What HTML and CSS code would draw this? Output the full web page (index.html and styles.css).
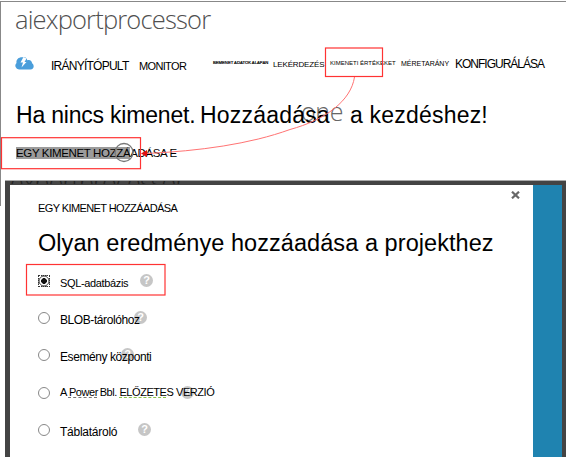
FILE: index.html
```html
<!DOCTYPE html>
<html lang="hu">
<head>
<meta charset="utf-8">
<title>aiexportprocessor</title>
<link rel="stylesheet" href="styles.css">
</head>
<body>
<main class="page">
  <h1 class="job">aiexportprocessor</h1>
  <nav class="nav">
    <svg class="cloud" width="19" height="13" viewBox="0 0 19 13"><path d="M4 12.5A3.8 3.8 0 0 1 1.5 6C1 3 3 .3 7 .3H9.500C11 .3 12 2 12.3 3.2C15 2.2 17.2 4 17 6.3C19.8 8 19 12.5 15.5 12.5Z" fill="#4a9edb"/><path d="M8.500 0L5.500 5.500H8L6.500 10.500L11.500 5H9.500L11.500 1.500Z" fill="#fff"/></svg>
    <a class="n1">IRÁNYÍTÓPULT</a>
    <a class="n2">MONITOR</a>
    <a class="n3">BEMENET ADATOK ALAPÁN</a>
    <a class="n4">LEKÉRDEZÉS</a>
    <a class="n5">KIMENETI ÉRTÉKEKET</a>
    <a class="n6">MÉRETARÁNY</a>
    <a class="n7">KONFIGURÁLÁSA</a>
  </nav>
  <span class="ghost-one">one</span>
  <h2 class="empty"><span class="e1">Ha nincs kimenet.</span><span class="e2">Hozzáadása</span><span class="e3">a kezdéshez!</span></h2>
  <p class="add"><span class="sel">EGY KIMENET HOZZÁ</span>ADÁSA E</p>
  <section class="dialog">
    <span class="ghost-title">exportprocessor</span>
    <div class="body">
      <svg class="close" width="9" height="8" viewBox="0 0 9 8"><path d="M1 .7L8 7.3M8 .7L1 7.3" stroke="#686868" stroke-width="2.2"/></svg>
      <h4 class="crumb">EGY KIMENET HOZZÁADÁSA</h4>
      <h3 class="title">Olyan eredménye hozzáadása a projekthez</h3>
      <div class="options">
        <label class="opt"><i class="radio on"></i><span class="o1">SQL-adatbázis</span><b class="help h1">?</b></label>
        <label class="opt"><i class="radio"></i><span class="o2">BLOB-tárolóhoz</span><b class="help h2">?</b></label>
        <label class="opt"><i class="radio"></i><span class="o3">Esemény központi</span><b class="help h3">?</b></label>
        <label class="opt"><i class="radio"></i><span class="o4">A <u>Power</u>&thinsp;Bbl. <em>ELŐZETE</em>S VERZIÓ</span><b class="help h4">?</b></label>
        <label class="opt"><i class="radio"></i><span class="o5">Táblatároló</span><b class="help h5">?</b></label>
      </div>
    </div>
    <aside class="rail"></aside>
  </section>
  <svg class="marks" width="566" height="457" viewBox="0 0 566 457" fill="none">
    <circle cx="124" cy="152.5" r="9" stroke="#777" stroke-width="1.3"/>
    <path d="M354.500 77C351 101 325 120 290 129.500C250 144 200 151 146 153.500" stroke="#ff7373" stroke-width="1"/>
    <path d="M141 153.500L147 150V157Z" fill="#e01010"/>
    <g stroke="#f33" stroke-width="1.200"><rect x="325.500" y="48" width="57" height="28.500"/><rect x="1.500" y="137.700" width="139" height="31"/><rect x="26.500" y="264.500" width="138.500" height="30.500"/></g>
  </svg>
</main>
</body>
</html>
```

FILE: styles.css
```css
* { box-sizing: border-box; }
body { margin: 0; background: #fff; font-family: "Liberation Sans", Arial, sans-serif; color: #000; }
h1, h2, h3, h4, p { margin: 0; font-weight: 400; white-space: nowrap; }
.page { position: relative; width: 566px; height: 457px; overflow: hidden; display: flex; flex-direction: column; }
.page::before { content: ""; position: absolute; left: 0; top: 1px; width: 566px; height: 204px; border-left: 1.5px solid #888; border-top: 1px solid #888; }
.job { padding-left: 15px; height: 50px; font: 300 25.5px/38px "Open Sans", sans-serif; color: #505050; letter-spacing: -.83px; }
.nav { display: grid; grid-template-columns: 36px 88px 74px 60px 57px 71px 54px 90px; padding-left: 15px; height: 28px; align-items: center; white-space: nowrap; }
.cloud { margin-top: -1px; }
.n1 { font-size: 12px; letter-spacing: -.75px; padding-top: 3px; }
.n2 { font-size: 11px; letter-spacing: -.65px; padding-top: 4px; }
.n3 { font-size: 4.2px; margin-top: -3px; -webkit-text-stroke: .2px #000; }
.n4 { font-size: 8px; letter-spacing: -.15px; }
.n5 { font-size: 6px; margin-top: -3px; }
.n6 { font-size: 7px; margin-top: -2px; }
.n7 { font-size: 12px; letter-spacing: -1px; }
.ghost-one { position: absolute; left: 301px; top: 94px; font: 300 25px/34px "Open Sans", sans-serif; color: #666; letter-spacing: -.3px; }
.empty { position: relative; display: flex; height: 60px; padding: 22px 0 0 16px; font-size: 23px; line-height: 30px; }
.e1 { width: 184px; letter-spacing: -.2px; }
.e2 { width: 150px; letter-spacing: .2px; }
.e3 { letter-spacing: .2px; }
.add { position: relative; padding-left: 16px; height: 43px; padding-top: 9px; font-size: 11.5px; line-height: 13px; letter-spacing: -.36px; }
.sel { background: #9b9b9b; }
.dialog { position: relative; display: flex; height: 276px; margin-left: 5px; border: solid #444; border-width: 4px 4px 0 5px; box-shadow: 0 -1px #aaa; }
.ghost-title { position: absolute; left: 0; top: -4px; width: 180px; height: 3px; overflow: hidden; font: 300 25px/3px "Open Sans", sans-serif; color: #222; letter-spacing: -.8px; }
.body { position: relative; width: 523px; padding: 17px 0 0 28px; }
.close { position: absolute; left: 501px; top: 6px; }
.rail { flex: 1; background: #1f83b0; }
.crumb { font-size: 11px; line-height: 13px; letter-spacing: -.6px; }
.title { margin-top: 13px; font-size: 23.5px; line-height: 30px; letter-spacing: .06px; }
.options { margin-top: 6px; }
.opt { position: relative; display: flex; gap: 10px; height: 37.200px; align-items: center; font-size: 12px; letter-spacing: -.42px; white-space: nowrap; }
.radio { width: 12px; height: 12px; border: 1.5px solid #888; border-radius: 50%; margin-top: -3px; }
.radio.on { border: 1px dotted #333; border-radius: 0; background: radial-gradient(circle, #111 0 2.600px, #fff 3.100px 4.100px, #777 4.600px 5.200px, #fff 5.700px); }
.opt span { position: relative; z-index: 1; }
.help { position: absolute; top: 10px; width: 13px; height: 13px; border-radius: 50%; background: #c6c6c6; color: #fff; font-size: 11px; line-height: 13px; text-align: center; letter-spacing: 0; }
.h1 { left: 102px; } .h2 { left: 96px; } .h3 { left: 83px; } .h4 { left: 143px; } .h5 { left: 100px; }
.opt .o1 { font-size: 11px; letter-spacing: -.35px; }
.opt .o4 { font-size: 11px; letter-spacing: -.44px; top: -2px; }
.opt .o5 { letter-spacing: -.25px; top: 1px; }
.o4 u { text-decoration: underline dashed #777 1px; }
.o4 em { font-style: normal; text-decoration: underline dashed #8bc34a 1px; }
.marks { position: absolute; left: 0; top: 0; pointer-events: none; }
```
